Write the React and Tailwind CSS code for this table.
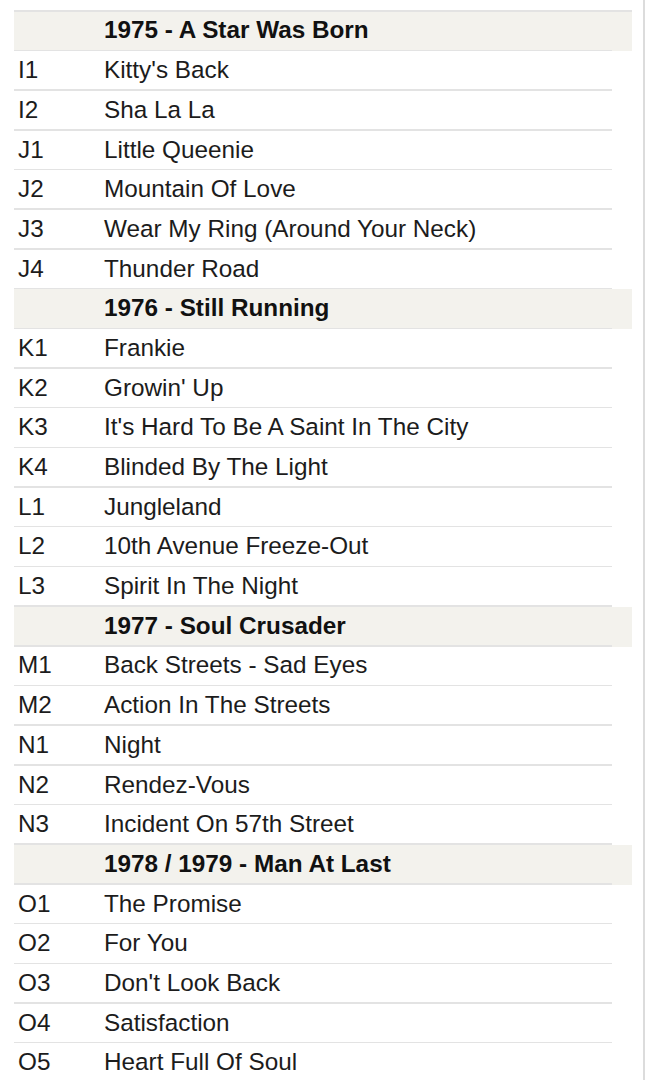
import React from "react";

const sections = [
  {
    title: "1975 - A Star Was Born",
    tracks: [
      ["I1", "Kitty's Back"],
      ["I2", "Sha La La"],
      ["J1", "Little Queenie"],
      ["J2", "Mountain Of Love"],
      ["J3", "Wear My Ring (Around Your Neck)"],
      ["J4", "Thunder Road"],
    ],
  },
  {
    title: "1976 - Still Running",
    tracks: [
      ["K1", "Frankie"],
      ["K2", "Growin' Up"],
      ["K3", "It's Hard To Be A Saint In The City"],
      ["K4", "Blinded By The Light"],
      ["L1", "Jungleland"],
      ["L2", "10th Avenue Freeze-Out"],
      ["L3", "Spirit In The Night"],
    ],
  },
  {
    title: "1977 - Soul Crusader",
    tracks: [
      ["M1", "Back Streets - Sad Eyes"],
      ["M2", "Action In The Streets"],
      ["N1", "Night"],
      ["N2", "Rendez-Vous"],
      ["N3", "Incident On 57th Street"],
    ],
  },
  {
    title: "1978 / 1979 - Man At Last",
    tracks: [
      ["O1", "The Promise"],
      ["O2", "For You"],
      ["O3", "Don't Look Back"],
      ["O4", "Satisfaction"],
      ["O5", "Heart Full Of Soul"],
    ],
  },
];

const Row = ({ code, title, header }) => (
  <div className={header ? "w-[618px] bg-[#f3f2ed]" : "w-[618px]"}>
    <div className="flex items-center h-[38.2px]">
      <div className="w-[90px] pl-[4px] text-[#1c1c1c]">{code}</div>
      <div className={header ? "font-bold text-[#111]" : "text-[#1c1c1c]"}>{title}</div>
    </div>
    <div className="h-[1.5px] w-[598px] bg-[#e3e3e3]" />
  </div>
);

const App = () => {
  return (
    <div
      className="w-[645px] min-h-[1080px] bg-white border-r-2 border-[#dcdcdc] pt-[10px] pl-[14px] overflow-hidden"
      style={{ fontFamily: '"Liberation Sans", Arial, sans-serif' }}
    >
      <div className="text-[24.3px] leading-none">
        <div className="h-[1.5px] w-[618px] bg-[#e3e3e3]" />
        {sections.map((section) => (
          <div key={section.title}>
            <Row header title={section.title} />
            {section.tracks.map(([code, title]) => (
              <Row key={code} code={code} title={title} />
            ))}
          </div>
        ))}
      </div>
    </div>
  );
};

export default App;
